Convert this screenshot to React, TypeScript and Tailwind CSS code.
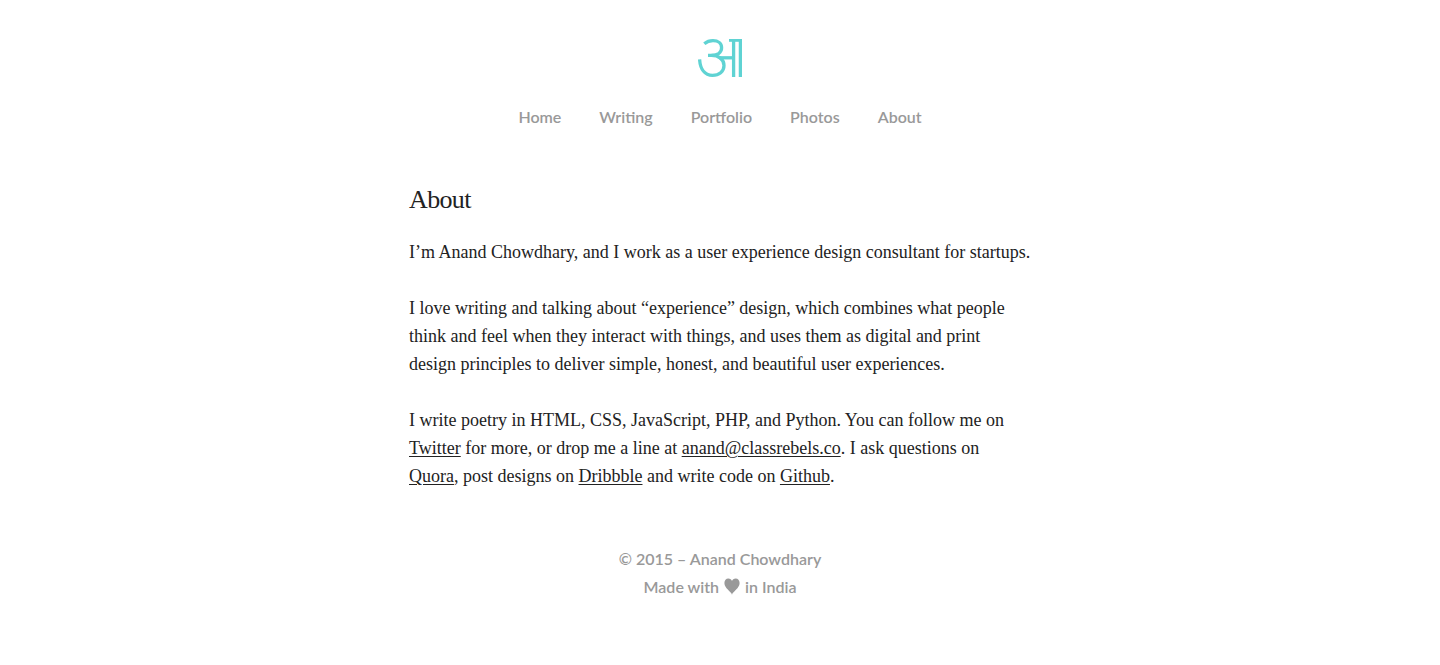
import type { ReactNode } from "react";

const navItems = ["Home", "Writing", "Portfolio", "Photos", "About"];

function Logo() {
  return (
    <svg viewBox="0 0 44 38" className="h-[38px] w-11" fill="none" stroke="#5fd3d3" strokeWidth="3.3" aria-hidden="true">
      <path d="M6.3 4.8C9 2.5 12 1.7 15 1.7C20 1.7 23.6 4.4 23.6 8.8C23.6 13.4 19.5 16.4 13.5 16.4H10" />
      <path d="M13.5 16.4C20.5 16.4 26 20.2 26 26.5C26 32.6 21 36.3 14.5 36.3C6.8 36.3 2.2 30 1.6 20.4" />
      <path d="M21 18.8H36" />
      <path d="M31 1.4H44" strokeWidth="2.8" />
      <path d="M35.6 1V38M42.4 1V38" />
    </svg>
  );
}

function Heart() {
  return (
    <svg viewBox="0 0 16 17" className="mx-[5px] inline-block h-[17px] w-4 align-[-2px]" fill="#999" role="img" aria-label="love">
      <path d="M8 16.7C7 13.4 0.4 10.4 0.4 5.1C0.4 2.3 2.1 0.5 4.3 0.5C6.2 0.5 7.5 1.6 8 2.9C8.5 1.6 9.8 0.5 11.7 0.5C13.9 0.5 15.6 2.3 15.6 5.1C15.6 10.4 9 13.4 8 16.7Z" />
    </svg>
  );
}

function TextLink({ href, children }: { href: string; children: ReactNode }) {
  return (
    <a href={href} className="underline underline-offset-2">
      {children}
    </a>
  );
}

export default function App() {
  return (
    <div className="min-h-screen bg-white px-4 pt-[39px] pb-16 text-[#222]">
      <header className="flex flex-col items-center gap-[26px] font-['Lato','Noto_Sans',sans-serif]">
        <a href="#home" aria-label="Anand Chowdhary">
          <Logo />
        </a>
        <nav className="flex flex-wrap justify-center gap-x-[38px] text-base leading-7 font-semibold text-[#999]">
          {navItems.map((item) => (
            <a key={item} href={`#${item.toLowerCase()}`}>
              {item}
            </a>
          ))}
        </nav>
      </header>
      <main className="mx-auto mt-[55px] flex max-w-[622px] flex-col gap-7 font-['Liberation_Serif',serif] text-lg leading-7">
        <h1 className="-mb-1 text-[26px] leading-7 tracking-tight">About</h1>
        <p>I’m Anand Chowdhary, and I work as a user experience design consultant for startups.</p>
        <p>
          I love writing and talking about “experience” design, which combines what people think and feel when they
          interact with things, and uses them as digital and print design principles to deliver simple, honest, and
          beautiful user experiences.
        </p>
        <p>
          I write poetry in HTML, CSS, JavaScript, PHP, and Python. You can follow me on{" "}
          <TextLink href="#twitter">Twitter</TextLink> for more, or drop me a line at{" "}
          <TextLink href="mailto:anand@classrebels.co">anand@classrebels.co</TextLink>. I ask questions on{" "}
          <TextLink href="#quora">Quora</TextLink>, post designs on <TextLink href="#dribbble">Dribbble</TextLink> and
          write code on <TextLink href="#github">Github</TextLink>.
        </p>
      </main>
      <footer className="mt-[55px] text-center font-['Lato','Noto_Sans',sans-serif] text-base leading-7 font-semibold text-[#999]">
        <p>© 2015 – Anand Chowdhary</p>
        <p>
          Made with
          <Heart />
          in India
        </p>
      </footer>
    </div>
  );
}
